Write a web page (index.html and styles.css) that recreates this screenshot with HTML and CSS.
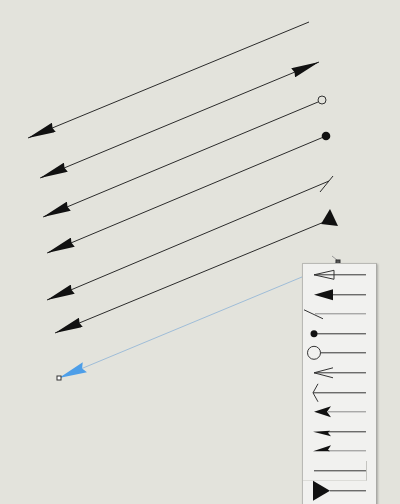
FILE: index.html
```html
<!DOCTYPE html>
<html lang="en">

<head>
  <meta charset="UTF-8" />
  <meta name="viewport" content="width=device-width, initial-scale=1.0" />
  <title>Line ends</title>
  <link rel="stylesheet" href="styles.css">
</head>

<body>
  <div class="canvas">
    <!-- Drawing area with the connector lines -->
    <svg class="drawing" width="400" height="504" viewBox="0 0 400 504">
      <defs>
        <marker id="head" viewBox="0 0 28 10" refX="28" refY="5" markerWidth="28" markerHeight="10"
          markerUnits="userSpaceOnUse" orient="auto-start-reverse">
          <path d="M0 0 L28 5 L0 10 L1.5 5 Z" fill="#111" />
        </marker>
        <marker id="head-blue" viewBox="0 0 28 12" refX="28" refY="6" markerWidth="28" markerHeight="12"
          markerUnits="userSpaceOnUse" orient="auto">
          <path d="M0 0.5 L28 6 L0 11.5 L3 6 Z" fill="#4d9ee8" />
        </marker>
      </defs>

      <!-- plain end -->
      <line class="link" x1="309" y1="22" x2="28" y2="138" marker-end="url(#head)" />
      <!-- arrow on both ends -->
      <line class="link" x1="319" y1="62" x2="40" y2="178" marker-start="url(#head)" marker-end="url(#head)" />
      <!-- open circle -->
      <line class="link" x1="318" y1="102" x2="43" y2="217" marker-end="url(#head)" />
      <circle cx="322" cy="100" r="4" fill="none" stroke="#333" />
      <!-- filled dot -->
      <line class="link" x1="326" y1="136" x2="47" y2="253" marker-end="url(#head)" />
      <circle cx="326" cy="136" r="4.3" fill="#111" />
      <!-- single barb -->
      <line class="link" x1="329" y1="181" x2="47" y2="300" marker-end="url(#head)" />
      <line class="link" x1="333" y1="176" x2="320" y2="192" />
      <!-- big triangle -->
      <line class="link" x1="324" y1="222" x2="55" y2="333" marker-end="url(#head)" />
      <polygon points="330,209 321,224 338,226" fill="#111" />

      <!-- selected connector -->
      <line x1="332" y1="256" x2="337" y2="260" stroke="#999" stroke-width="1" />
      <line x1="338" y1="262" x2="59" y2="378" stroke="#9fbdd8" stroke-width="1" marker-end="url(#head-blue)" />
      <rect x="57" y="376" width="4" height="4" fill="#fff" stroke="#333" stroke-width="1" />
      <rect x="336" y="260" width="4" height="4" fill="#555" stroke="#333" stroke-width="1" />
    </svg>

    <!-- Line end picker -->
    <ul class="menu">
      <li class="menu-item">
        <svg width="73" height="19.6" viewBox="0 -9.8 73 19.6">
          <line class="stem" x1="11" y1="0" x2="63" y2="0" />
          <polygon points="11,0 31,-4.5 31,4.5" fill="none" stroke="#333" />
        </svg>
      </li>
      <li class="menu-item">
        <svg width="73" height="19.6" viewBox="0 -9.8 73 19.6">
          <line class="stem" x1="28" y1="0" x2="63" y2="0" />
          <polygon points="11,0 30,-5.5 30,5.5" fill="#111" />
        </svg>
      </li>
      <li class="menu-item">
        <svg width="73" height="19.6" viewBox="0 -9.8 73 19.6">
          <line class="stem light" x1="12" y1="0" x2="63" y2="0" />
          <line class="stem" x1="1" y1="-4" x2="20" y2="5" />
        </svg>
      </li>
      <li class="menu-item">
        <svg width="73" height="19.6" viewBox="0 -9.8 73 19.6">
          <line class="stem" x1="11" y1="0" x2="63" y2="0" />
          <circle cx="11" cy="0" r="3.5" fill="#111" />
        </svg>
      </li>
      <li class="menu-item">
        <svg width="73" height="19.6" viewBox="0 -9.8 73 19.6">
          <line class="stem" x1="17.5" y1="0" x2="63" y2="0" />
          <circle cx="11" cy="0" r="6.5" fill="none" stroke="#333" />
        </svg>
      </li>
      <li class="menu-item">
        <svg width="73" height="19.6" viewBox="0 -9.8 73 19.6">
          <line class="stem" x1="11" y1="0" x2="63" y2="0" />
          <polyline points="30,-5 11,0 30,5" fill="none" stroke="#333" />
        </svg>
      </li>
      <li class="menu-item">
        <svg width="73" height="19.6" viewBox="0 -9.8 73 19.6">
          <line class="stem" x1="10" y1="0" x2="63" y2="0" />
          <polyline points="15,-9 10,0 15,9" fill="none" stroke="#333" />
        </svg>
      </li>
      <li class="menu-item">
        <svg width="73" height="19.6" viewBox="0 -9.8 73 19.6">
          <line class="stem light" x1="25" y1="0" x2="63" y2="0" />
          <path d="M11 0 L28 -5.5 L24 0 L28 5.5 Z" fill="#111" />
        </svg>
      </li>
      <li class="menu-item">
        <svg width="73" height="19.6" viewBox="0 -9.8 73 19.6">
          <line class="stem" x1="25" y1="0" x2="63" y2="0" />
          <path d="M10 0 L27 -1 L25 1 L28 4.5 Z" fill="#111" />
        </svg>
      </li>
      <li class="menu-item">
        <svg width="73" height="19.6" viewBox="0 -9.8 73 19.6">
          <line class="stem light" x1="25" y1="0" x2="63" y2="0" />
          <path d="M10 0.5 L28 -5.5 L25 -1 L27 0.5 Z" fill="#111" />
        </svg>
      </li>
      <li class="menu-item framed">
        <svg width="73" height="19.6" viewBox="0 -9.8 73 19.6">
          <line class="stem" x1="11" y1="0" x2="63" y2="0" />
        </svg>
      </li>
      <li class="menu-item">
        <svg width="73" height="19.6" viewBox="0 -9.8 73 19.6">
          <line class="stem" x1="27" y1="0" x2="63" y2="0" />
          <polygon points="10,-10 27,0 10,10" fill="#111" />
        </svg>
      </li>
    </ul>
  </div>
</body>

</html>
```

FILE: styles.css
```css
*,
*::after,
*::before {
  margin: 0;
  padding: 0;
  box-sizing: border-box;
}

body {
  width: 400px;
  height: 504px;
  overflow: hidden;
  background-color: #e3e3dc;
  font-family: 'Liberation Sans', sans-serif;
}

.canvas {
  position: relative;
  width: 400px;
  height: 504px;
}

.drawing {
  display: block;
}

.link {
  stroke: #2b2b2b;
  stroke-width: 1;
  fill: none;
}

/* Dropdown with the available line ends */
.menu {
  position: absolute;
  left: 302px;
  top: 263px;
  width: 75px;
  height: 260px;
  padding-top: 1px;
  list-style: none;
  background-color: #f1f1ef;
  border: 1px solid #b9b9b5;
  border-right-color: #a9a9a5;
  box-shadow: 1px 1px 2px rgba(0, 0, 0, 0.25);
}

.menu-item {
  height: 19.6px;
}

.menu-item svg {
  display: block;
  overflow: visible;
}

.stem {
  stroke: #333;
  stroke-width: 1;
}

.stem.light {
  stroke: #8a8a8a;
}

.menu-item.framed {
  margin-right: 9px;
  border-right: 1px solid #c4c4c0;
  border-bottom: 1px solid #dcdcd8;
}
```
